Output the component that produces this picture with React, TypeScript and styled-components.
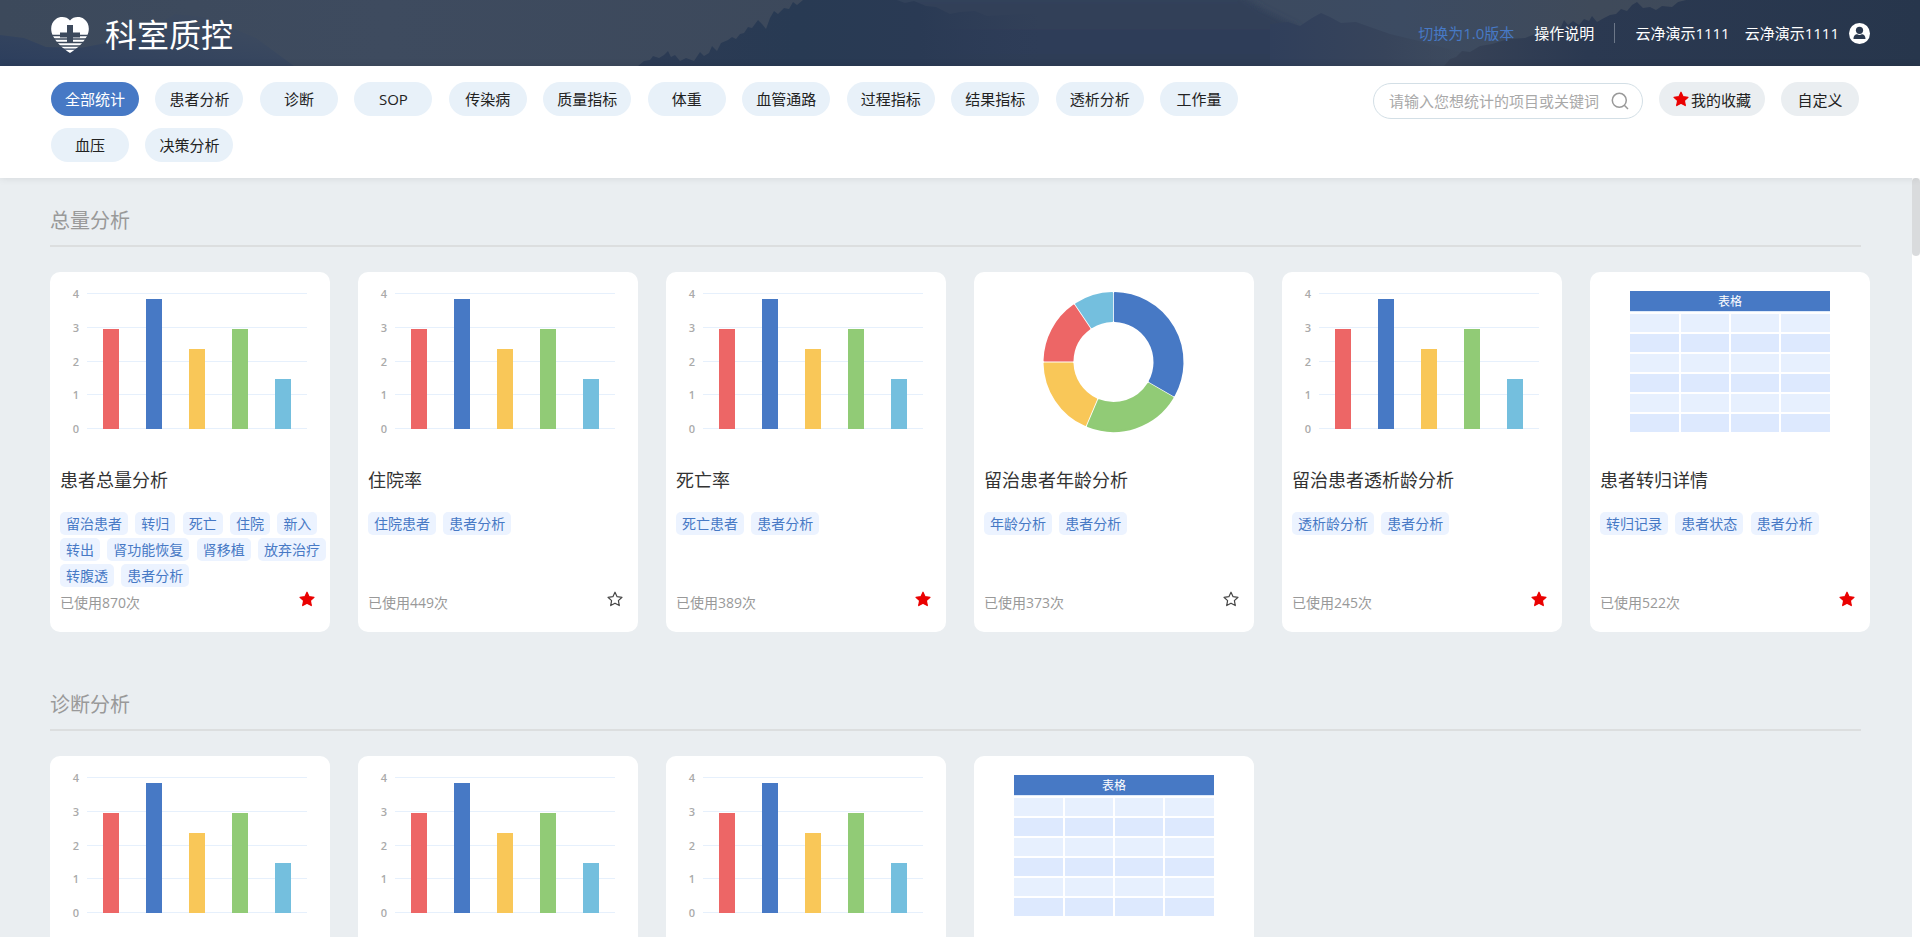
import React from 'react';
import styled, { createGlobalStyle } from 'styled-components';

const BLUE = '#4779c5';

const GlobalStyle = createGlobalStyle`
  *, *::before, *::after { box-sizing: border-box; }
  body {
    margin: 0;
    background: #eaeef1;
    color: #222;
    font-family: 'Open Sans', 'Noto Sans CJK SC', sans-serif;
    font-size: 15px;
  }
  button, input { font: inherit; color: inherit; }
  a { color: inherit; text-decoration: none; }
`;

const Page = styled.div`
  display: flex;
  flex-direction: column;
  height: 100vh;
  overflow: hidden;
`;

/* ---------- header ---------- */

const Header = styled.header`
  position: relative;
  flex: none;
  display: flex;
  align-items: center;
  justify-content: space-between;
  height: 66px;
  padding: 0 50px 0 51px;
  color: #fff;
`;

const Backdrop = styled.svg`
  position: absolute;
  inset: 0;
  width: 100%;
  height: 100%;
`;

const Brand = styled.div`
  position: relative;
  display: flex;
  align-items: center;
  gap: 16px;
  padding-top: 4px;
`;

const BrandName = styled.h1`
  margin: 0;
  font-size: 32px;
  font-weight: 400;
  line-height: 40px;
`;

const UserBar = styled.nav`
  position: relative;
  display: flex;
  align-items: center;
  gap: 20px;
  line-height: 24px;
`;

const TopLink = styled.a<{ $accent?: boolean }>`
  color: ${(p) => (p.$accent ? BLUE : '#fff')};
`;

const Divider = styled.span`
  width: 1px;
  height: 20px;
  background: #6c7788;
`;

const Account = styled.div`
  display: flex;
  align-items: center;
  gap: 15px;
`;

const AccountButton = styled.button`
  display: flex;
  align-items: center;
  gap: 10px;
  padding: 0;
  border: 0;
  background: none;
`;

/* ---------- filter bar ---------- */

const FilterBar = styled.div`
  position: relative;
  z-index: 1;
  flex: none;
  display: flex;
  justify-content: space-between;
  align-items: flex-start;
  padding: 16px 61px 4px 51px;
  background: #fff;
  box-shadow: 0 0 8px rgba(0, 0, 0, 0.1);
`;

const Tabs = styled.div`
  flex: 0 1 1260px;
  font-family: 'Liberation Sans', sans-serif;
  font-size: 16px;
  line-height: 20px;
`;

const Pill = styled.button<{ $tone?: 'active' | 'grey' }>`
  display: inline-flex;
  align-items: center;
  justify-content: center;
  gap: 2px;
  vertical-align: top;
  min-width: 78px;
  height: 34px;
  padding: 0 14px;
  border: 0;
  border-radius: 17px;
  font-family: 'Open Sans', 'Noto Sans CJK SC', sans-serif;
  font-size: 15px;
  color: ${(p) => (p.$tone === 'active' ? '#fff' : '#222')};
  background: ${(p) => (p.$tone === 'active' ? BLUE : p.$tone === 'grey' ? '#eaeef1' : '#e8f1f9')};
`;

const Tab = styled(Pill)`
  margin: 0 12px 12px 0;
`;

const Tools = styled.div`
  flex: none;
  display: flex;
  align-items: flex-start;
  gap: 16px;
`;

const SearchBox = styled.label`
  display: flex;
  align-items: center;
  width: 270px;
  height: 36px;
  margin-top: 1px;
  padding: 0 13px 0 15px;
  border: 1px solid #d3dfe6;
  border-radius: 18px;
`;

const SearchInput = styled.input`
  flex: 1;
  min-width: 0;
  padding: 0;
  border: 0;
  outline: 0;
  background: none;
  &::placeholder { color: #a9a9a9; opacity: 1; }
`;

/* ---------- content ---------- */

const Body = styled.div`
  flex: 1;
  min-height: 0;
  display: flex;
`;

const Content = styled.main`
  flex: 1;
  min-width: 0;
  overflow: hidden;
  padding: 22px 42px 0 50px;
`;

const ScrollTrack = styled.div`
  flex: none;
  width: 8px;
  background: #fff;
`;

const ScrollThumb = styled.div`
  height: 78px;
  border-radius: 4px;
  background: #d9dbdd;
`;

const Section = styled.section`
  margin-bottom: 52px;
`;

const SectionTitle = styled.h2`
  margin: 0 9px 25px 0;
  padding-bottom: 3px;
  border-bottom: 2px solid #dcdedf;
  font-size: 20px;
  font-weight: 400;
  line-height: 42px;
  color: #999;
`;

const CardGrid = styled.div`
  display: grid;
  grid-template-columns: repeat(auto-fill, 280px);
  gap: 28px;
`;

const Card = styled.article`
  min-height: 360px;
  padding-bottom: 16px;
  border-radius: 10px;
  background: #fff;
`;

const Thumb = styled.svg`
  display: block;
  width: 280px;
  height: 180px;
`;

const CardTitle = styled.h3`
  margin: 0;
  padding: 14px 10px 18px;
  font-size: 18px;
  font-weight: 400;
  line-height: 28px;
  color: #333;
`;

const Tags = styled.div`
  min-height: 78px;
  margin-right: -4px;
  padding-left: 10px;
  font-family: 'Liberation Sans', sans-serif;
  font-size: 12px;
  line-height: 14px;
`;

const Tag = styled.span`
  display: inline-block;
  vertical-align: top;
  margin: 0 4px 3px 0;
  padding: 0 6px;
  border-radius: 5px;
  background: #ecf3ff;
  color: ${BLUE};
  font-family: 'Open Sans', 'Noto Sans CJK SC', sans-serif;
  font-size: 14px;
  line-height: 23px;
`;

const CardFoot = styled.div`
  display: flex;
  justify-content: space-between;
  align-items: flex-start;
  padding: 0 15px 0 10px;
  font-size: 14px;
  line-height: 26px;
  color: #999;
`;

const StarButton = styled.button`
  display: flex;
  padding: 1px 0;
  border: 0;
  background: none;
`;

/* ---------- drawings ---------- */

const HeaderBackdrop = () => (
  <Backdrop viewBox="0 0 1920 66" preserveAspectRatio="xMidYMid slice" aria-hidden="true">
    <defs>
      <linearGradient id="sky" x1="0" x2="1" y1="0" y2="0">
        <stop offset="0" stopColor="#3c495b" />
        <stop offset="0.2" stopColor="#3e4b5f" />
        <stop offset="0.5" stopColor="#3c485a" />
        <stop offset="0.73" stopColor="#3c4b62" />
        <stop offset="0.83" stopColor="#3f4a5a" />
        <stop offset="1" stopColor="#3c495b" />
      </linearGradient>
      <linearGradient id="farLeft" x1="0" x2="1" y1="1" y2="0">
        <stop offset="0" stopColor="#2c3e5d" />
        <stop offset="0.7" stopColor="#3b495f" />
        <stop offset="1" stopColor="#3c495d" />
      </linearGradient>
      <linearGradient id="mid" x1="638" x2="1040" y1="0" y2="0" gradientUnits="userSpaceOnUse">
        <stop offset="0" stopColor="#2c3b54" />
        <stop offset="0.4" stopColor="#283a53" />
        <stop offset="0.7" stopColor="#2a3a54" />
        <stop offset="1" stopColor="#2c3b56" stopOpacity="0" />
      </linearGradient>
      <linearGradient id="haze" x1="0" x2="0" y1="0" y2="1">
        <stop offset="0" stopColor="#35435a" />
        <stop offset="0.5" stopColor="#2f3e59" />
        <stop offset="1" stopColor="#2c3b56" />
      </linearGradient>
      <linearGradient id="ridge" x1="0" x2="1" y1="0" y2="0">
        <stop offset="0" stopColor="#303f5b" />
        <stop offset="0.5" stopColor="#37445b" />
        <stop offset="1" stopColor="#3f4a5a" stopOpacity="0" />
      </linearGradient>
      <linearGradient id="near" x1="0" x2="1" y1="0" y2="0">
        <stop offset="0" stopColor="#384357" />
        <stop offset="0.3" stopColor="#2b3951" />
        <stop offset="1" stopColor="#27364c" />
      </linearGradient>
      <filter id="soft" x="-10%" y="-50%" width="120%" height="200%">
        <feGaussianBlur stdDeviation="3" />
      </filter>
    </defs>
    <rect width="1920" height="66" fill="url(#sky)" />
    <path d="M0 35L24 38L46 47L80 48L122 40L150 29L175 14L204 17L232 28L256 38L294 66H0Z" fill="url(#farLeft)" />
    <path d="M860 -10H1234L1262 9L1296 26L1340 80H860Z" fill="url(#haze)" filter="url(#soft)" />
    <path
      d="M638 66L644 61L650 60L653 56L659 58L664 55L668 51L671 57L675 55L680 61L686 58L694 61L700 52L704 56L709 53L712 46L717 51L721 43L728 40L732 37L736 39L740 34L744 33L748 27L752 28L758 20L762 24L766 29L770 18L774 11L778 14L784 8L789 9L793 2L797 5L803 0H897L905 3L914 1L926 6L936 7L950 14L960 12L975 11L987 16L1005 15L1040 13V66Z"
      fill="url(#mid)"
    />
    <path d="M1270 24L1288 22L1300 26L1312 18L1321 13L1330 17L1341 23L1356 22L1370 27L1390 34L1415 40L1460 52L1500 66H1270Z" fill="url(#ridge)" />
    <path
      d="M1444 66L1450 59L1456 57L1462 51L1470 52L1480 46L1492 44L1508 39L1525 38L1540 32L1552 33L1561 27L1564 20L1568 25L1573 21L1579 25L1584 19L1589 21L1592 16L1597 22L1604 18L1610 15L1616 14L1621 9L1627 11L1632 5L1637 2L1643 8L1650 7L1656 10L1662 6L1672 7L1678 2L1686 0H1920V66Z"
      fill="url(#near)"
    />
  </Backdrop>
);

const Logo = () => (
  <svg width="38" height="36" viewBox="0 0 38 36" aria-hidden="true">
    <mask id="logoCut">
      <rect width="38" height="36" fill="#fff" />
      <path d="M16 8h6v7.5h7v5H9v-5h7zM16 20h6v6h-6z" fill="#000" />
      <path d="M0 18.500h9.500M28.500 18.500H38M0 22h38M0 25.500h38M0 29h38M0 32.200h38" stroke="#000" strokeWidth="1.300" />
    </mask>
    <path
      d="M19 3.500C16 -0.500 9 -1 5 2C-0.500 6-1 13 2 19C6 27 13 32 19 36C25 32 32 27 36 19C39 13 38.500 6 33 2C29-1 22-0.500 19 3.500Z"
      fill="#fff"
      mask="url(#logoCut)"
    />
  </svg>
);

const Avatar = () => (
  <svg width="21" height="21" viewBox="0 0 21 21" aria-hidden="true">
    <circle cx="10.500" cy="10.500" r="10.500" fill="#fff" />
    <circle cx="10.500" cy="7.300" r="3.600" fill="#2a394f" />
    <path d="M4.500 16C4.500 12.600 6.500 11.300 8.200 11.300Q10.500 12.600 12.800 11.300C14.500 11.300 16.500 12.600 16.500 16Z" fill="#2a394f" />
  </svg>
);

const SearchIcon = () => (
  <svg width="18" height="18" viewBox="0 0 18 18" fill="none" stroke="#999" strokeWidth="1.500" aria-hidden="true">
    <circle cx="8.300" cy="8.300" r="7" />
    <path d="M13.300 13.300L17 17" />
  </svg>
);

const Star = ({ filled }: { filled: boolean }) => (
  <svg width="16" height="16" viewBox="0 0 16 16" aria-hidden="true">
    <path
      d="M8 1.200L10.100 5.700L15 6.300L11.400 9.600L12.300 14.600L8 12.200L3.700 14.600L4.600 9.600L1 6.300L5.900 5.700Z"
      fill={filled ? '#ea0000' : 'none'}
      stroke={filled ? '#ea0000' : '#444'}
      strokeWidth="1.200"
      strokeLinejoin="round"
    />
  </svg>
);

const AXIS = [
  { label: '4', y: 21 },
  { label: '3', y: 55 },
  { label: '2', y: 89 },
  { label: '1', y: 122 },
  { label: '0', y: 156 },
];

const BARS = [
  { x: 53, top: 57, color: '#ed6666' },
  { x: 96, top: 27, color: '#4779c5' },
  { x: 139, top: 77, color: '#f9c758' },
  { x: 182, top: 57, color: '#91cb76' },
  { x: 225, top: 107, color: '#74bfde' },
];

const BarThumb = () => (
  <Thumb viewBox="0 0 280 180" role="img">
    {AXIS.map((a) => (
      <g key={a.label}>
        <rect x="37" y={a.y} width="220" height="1" fill="#e6f0fc" />
        <text x="29" y={a.y + 5} textAnchor="end" fontFamily="Open Sans" fontSize="11" fontWeight="600" fill="#aaa">
          {a.label}
        </text>
      </g>
    ))}
    {BARS.map((b) => (
      <rect key={b.x} x={b.x} y={b.top} width="16" height={157 - b.top} fill={b.color} />
    ))}
  </Thumb>
);

const SLICES = [
  { from: 0, to: 120, color: '#4779c5' },
  { from: 120, to: 203, color: '#91cb76' },
  { from: 203, to: 270, color: '#f9c758' },
  { from: 270, to: 326, color: '#ed6666' },
  { from: 326, to: 360, color: '#74bfde' },
];

const polar = (deg: number, r: number) => {
  const a = (deg * Math.PI) / 180;
  return `${(139.5 + r * Math.sin(a)).toFixed(2)} ${(90 - r * Math.cos(a)).toFixed(2)}`;
};

/* Each slice is inset by a pixel and outlined in its own colour, which rounds its corners. */
const slicePath = (from: number, to: number) => {
  const outer = 69;
  const inner = 41;
  const o = (1.4 / outer) * 57.3;
  const i = (1.4 / inner) * 57.3;
  return `M${polar(from + o, outer)}A${outer} ${outer} 0 0 1 ${polar(to - o, outer)}L${polar(to - i, inner)}A${inner} ${inner} 0 0 0 ${polar(from + i, inner)}Z`;
};

const DonutThumb = () => (
  <Thumb viewBox="0 0 280 180" role="img">
    {SLICES.map((s) => (
      <path key={s.from} d={slicePath(s.from, s.to)} fill={s.color} stroke={s.color} strokeWidth="2" strokeLinejoin="round" />
    ))}
  </Thumb>
);

const COLUMNS = [
  { x: 40, w: 49 },
  { x: 91, w: 48 },
  { x: 141, w: 48 },
  { x: 191, w: 49 },
];

const TableThumb = () => (
  <Thumb viewBox="0 0 280 180" role="img">
    <rect x="40" y="19" width="200" height="20" fill={BLUE} />
    <rect x="40" y="39" width="200" height="1" fill="#dce9fa" />
    <text x="140" y="34" textAnchor="middle" fontFamily="Noto Sans CJK SC" fontSize="12" fill="#fff">
      表格
    </text>
    {[0, 1, 2, 3, 4, 5].map((row) =>
      COLUMNS.map((c) => (
        <rect key={`${row}-${c.x}`} x={c.x} y={42 + row * 20} width={c.w} height="18" fill={row % 2 ? '#dde9fe' : '#e7f0fe'} />
      )),
    )}
  </Thumb>
);

/* ---------- data ---------- */

type Kind = 'bar' | 'donut' | 'table';

interface Report {
  kind: Kind;
  title: string;
  tags: string[];
  used: number;
  starred: boolean;
}

const THUMBS: Record<Kind, React.FC> = { bar: BarThumb, donut: DonutThumb, table: TableThumb };

const TABS = ['全部统计', '患者分析', '诊断', 'SOP', '传染病', '质量指标', '体重', '血管通路', '过程指标', '结果指标', '透析分析', '工作量', '血压', '决策分析'];

const TOTALS: Report[] = [
  {
    kind: 'bar',
    title: '患者总量分析',
    tags: ['留治患者', '转归', '死亡', '住院', '新入', '转出', '肾功能恢复', '肾移植', '放弃治疗', '转腹透', '患者分析'],
    used: 870,
    starred: true,
  },
  { kind: 'bar', title: '住院率', tags: ['住院患者', '患者分析'], used: 449, starred: false },
  { kind: 'bar', title: '死亡率', tags: ['死亡患者', '患者分析'], used: 389, starred: true },
  { kind: 'donut', title: '留治患者年龄分析', tags: ['年龄分析', '患者分析'], used: 373, starred: false },
  { kind: 'bar', title: '留治患者透析龄分析', tags: ['透析龄分析', '患者分析'], used: 245, starred: true },
  { kind: 'table', title: '患者转归详情', tags: ['转归记录', '患者状态', '患者分析'], used: 522, starred: true },
];

const DIAGNOSES: Kind[] = ['bar', 'bar', 'bar', 'table'];

const ReportCard = ({ report }: { report: Report }) => {
  const Chart = THUMBS[report.kind];
  return (
    <Card>
      <Chart />
      <CardTitle>{report.title}</CardTitle>
      <Tags>
        {report.tags.map((tag) => (
          <React.Fragment key={tag}>
            <Tag>{tag}</Tag>{' '}
          </React.Fragment>
        ))}
      </Tags>
      <CardFoot>
        <span>已使用{report.used}次</span>
        <StarButton type="button" aria-pressed={report.starred}>
          <Star filled={report.starred} />
        </StarButton>
      </CardFoot>
    </Card>
  );
};

export default function App() {
  return (
    <Page>
      <GlobalStyle />
      <Header>
        <HeaderBackdrop />
        <Brand>
          <Logo />
          <BrandName>科室质控</BrandName>
        </Brand>
        <UserBar>
          <TopLink href="#" $accent>切换为1.0版本</TopLink>
          <TopLink href="#">操作说明</TopLink>
          <Divider />
          <Account>
            <span>云净演示1111</span>
            <AccountButton type="button">
              云净演示1111
              <Avatar />
            </AccountButton>
          </Account>
        </UserBar>
      </Header>

      <FilterBar>
        <Tabs>
          {TABS.map((name, index) => (
            <React.Fragment key={name}>
              <Tab type="button" $tone={index === 0 ? 'active' : undefined}>{name}</Tab>{' '}
            </React.Fragment>
          ))}
        </Tabs>
        <Tools>
          <SearchBox>
            <SearchInput type="text" placeholder="请输入您想统计的项目或关键词" />
            <SearchIcon />
          </SearchBox>
          <Pill type="button" $tone="grey">
            <Star filled />
            我的收藏
          </Pill>
          <Pill type="button" $tone="grey">自定义</Pill>
        </Tools>
      </FilterBar>

      <Body>
        <Content>
          <Section>
            <SectionTitle>总量分析</SectionTitle>
            <CardGrid>
              {TOTALS.map((report) => (
                <ReportCard key={report.title} report={report} />
              ))}
            </CardGrid>
          </Section>
          <Section>
            <SectionTitle>诊断分析</SectionTitle>
            <CardGrid>
              {DIAGNOSES.map((kind, index) => {
                const Chart = THUMBS[kind];
                return (
                  <Card key={index}>
                    <Chart />
                  </Card>
                );
              })}
            </CardGrid>
          </Section>
        </Content>
        <ScrollTrack>
          <ScrollThumb />
        </ScrollTrack>
      </Body>
    </Page>
  );
}
